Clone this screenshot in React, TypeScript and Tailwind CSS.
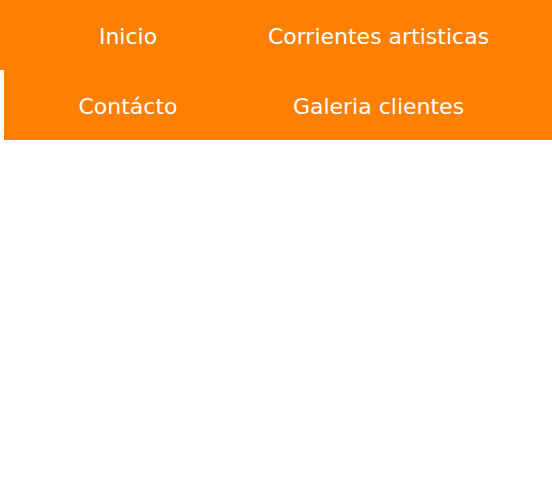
const rows = [
  { offset: 'ml-0', cols: 'grid-cols-[256px_245px]', items: ['Inicio', 'Corrientes artisticas'] },
  { offset: 'ml-[4px]', cols: 'grid-cols-[248px_253px]', items: ['Contácto', 'Galeria clientes'] },
];

export default function App() {
  return (
    <div className="w-[552px] h-[482px] bg-white font-['DejaVu_Sans',Verdana,sans-serif]">
      <nav>
        {rows.map((row, i) => (
          <ul key={i} className={`${row.offset} h-[70px] bg-[#ff8000] grid ${row.cols}`}>
            {row.items.map((label) => (
              <li key={label} className="flex items-center justify-center pt-[3px] text-[22px] text-white">
                <a href="#">{label}</a>
              </li>
            ))}
          </ul>
        ))}
      </nav>
    </div>
  );
}
